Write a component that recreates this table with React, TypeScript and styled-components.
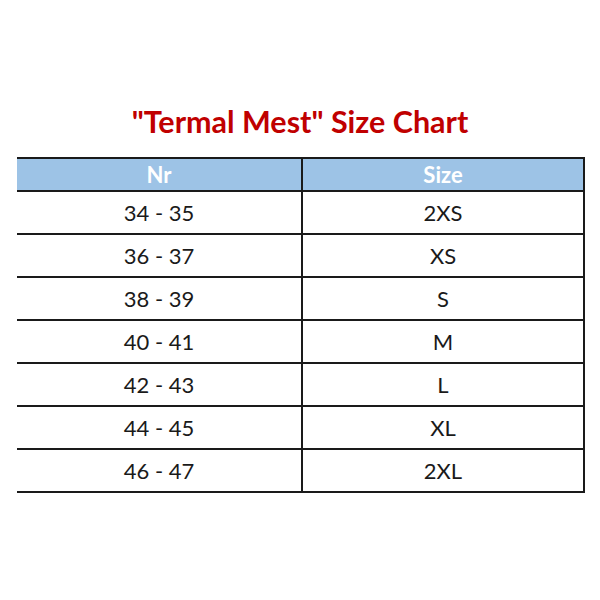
import styled, { createGlobalStyle } from 'styled-components';

const GlobalStyle = createGlobalStyle`
  html, body {
    margin: 0;
    padding: 0;
    background: #ffffff;
  }
  body {
    width: 600px;
    height: 600px;
    font-family: Lato, "Open Sans", sans-serif;
  }
`;

const Page = styled.div`
  width: 600px;
  height: 600px;
  box-sizing: border-box;
  padding-top: 104px;
  padding-left: 17px;
`;

const Title = styled.h1`
  margin: 0 0 19px;
  width: 566px;
  text-align: center;
  font-size: 30.5px;
  line-height: 34px;
  font-weight: 700;
  color: #c00000;
`;

const Table = styled.table`
  border-collapse: collapse;
  width: 567px;
  table-layout: fixed;
`;

const HeadCell = styled.th`
  height: 31px;
  padding: 0;
  background: #9dc3e6;
  color: #ffffff;
  font-size: 22px;
  font-weight: 700;
  text-align: center;
  border-top: 2px solid #1a1a1a;
  border-bottom: 2px solid #1a1a1a;
  border-right: 2px solid #1a1a1a;
`;

const Cell = styled.td`
  height: 41px;
  padding: 0;
  text-align: center;
  font-size: 22px;
  color: #1a1a1a;
  border-bottom: 2px solid #1a1a1a;
  border-right: 2px solid #1a1a1a;
`;

const rows: [string, string][] = [
  ['34 - 35', '2XS'],
  ['36 - 37', 'XS'],
  ['38 - 39', 'S'],
  ['40 - 41', 'M'],
  ['42 - 43', 'L'],
  ['44 - 45', 'XL'],
  ['46 - 47', '2XL'],
];

export default function App() {
  return (
    <>
      <GlobalStyle />
      <Page>
        <Title>"Termal Mest" Size Chart</Title>
        <Table>
          <colgroup>
            <col style={{ width: 285 }} />
            <col style={{ width: 282 }} />
          </colgroup>
          <thead>
            <tr>
              <HeadCell>Nr</HeadCell>
              <HeadCell>Size</HeadCell>
            </tr>
          </thead>
          <tbody>
            {rows.map(([nr, size]) => (
              <tr key={nr}>
                <Cell>{nr}</Cell>
                <Cell>{size}</Cell>
              </tr>
            ))}
          </tbody>
        </Table>
      </Page>
    </>
  );
}
